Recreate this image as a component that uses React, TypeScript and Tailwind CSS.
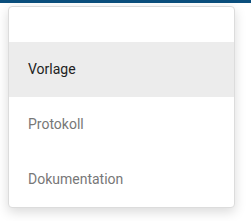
const items = [
  { label: 'Vorlage', active: true },
  { label: 'Protokoll', active: false },
  { label: 'Dokumentation', active: false },
];

export default function App() {
  return (
    <div className="w-[251px] h-[221px] bg-white overflow-hidden" style={{ fontFamily: 'Roboto, "Liberation Sans", sans-serif' }}>
      <div className="h-[3px] bg-[#0b4f7d]" />
      <div className="ml-2 mt-[3px] w-[227px] border border-[#dcdcdc] rounded-[4px] bg-white shadow-[0_4px_12px_rgba(0,0,0,0.15)] overflow-hidden">
        <div className="h-[35px]" />
        {items.map((item) => (
          <div
            key={item.label}
            className={`h-[55px] flex items-center px-[19px] text-[14px] ${
              item.active ? 'bg-[#ececec] text-[#222]' : 'text-[#777]'
            }`}
          >
            {item.label}
          </div>
        ))}
      </div>
    </div>
  );
}
